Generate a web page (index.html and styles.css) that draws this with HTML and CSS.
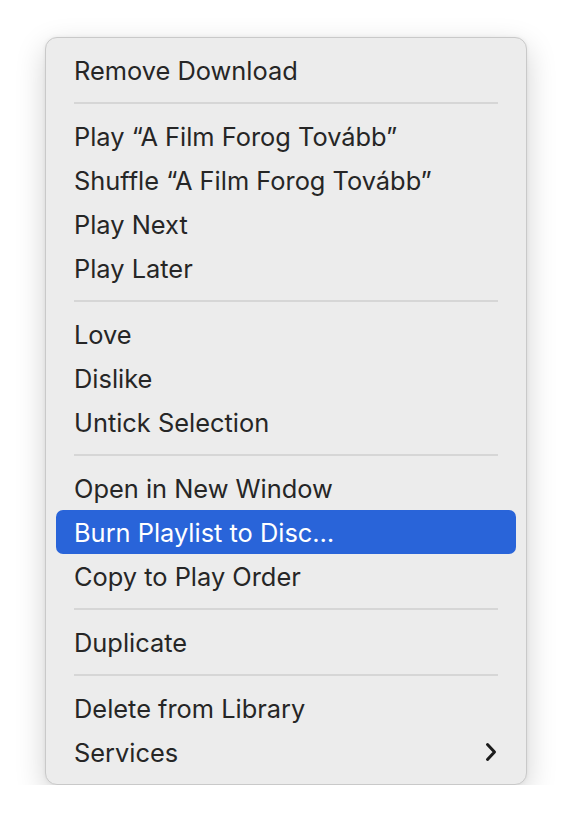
FILE: index.html
```html
<!DOCTYPE html>
<html lang="en">
<head>
    <meta charset="UTF-8">
    <title>Context Menu</title>
    <link rel="stylesheet" href="styles.css">
</head>
<body>
    <div class="menu">
        <div class="item">Remove Download</div>
        <div class="sep"></div>
        <div class="item">Play “A Film Forog Tovább”</div>
        <div class="item">Shuffle “A Film Forog Tovább”</div>
        <div class="item">Play Next</div>
        <div class="item">Play Later</div>
        <div class="sep"></div>
        <div class="item">Love</div>
        <div class="item">Dislike</div>
        <div class="item">Untick Selection</div>
        <div class="sep"></div>
        <div class="item">Open in New Window</div>
        <div class="item active">Burn Playlist to Disc…</div>
        <div class="item">Copy to Play Order</div>
        <div class="sep"></div>
        <div class="item">Duplicate</div>
        <div class="sep"></div>
        <div class="item">Delete from Library</div>
        <div class="item submenu">
            Services
            <svg class="chevron" width="12" height="20" viewBox="0 0 12 20">
                <path d="M2.5 2.5 L9.5 10 L2.5 17.5" fill="none" stroke="#1c1c1c" stroke-width="3" stroke-linecap="round" stroke-linejoin="round"/>
            </svg>
        </div>
    </div>
</body>
</html>
```

FILE: styles.css
```css
body {
    margin: 0;
    background: #ffffff;
    font-family: Inter, "Liberation Sans", sans-serif;
}
.menu {
    margin: 37px 0 0 45px;
    padding: 10px;
    box-sizing: border-box;
    width: 482px;
    height: 748px;
    background: #ececec;
    border: 1px solid #c9c9c9;
    border-radius: 12px;
    box-shadow: 0 10px 30px rgba(0, 0, 0, 0.18), 0 0 4px rgba(0, 0, 0, 0.06);
}
.item {
    height: 44px;
    box-sizing: border-box;
    display: flex;
    align-items: center;
    justify-content: space-between;
    padding: 0 19px 0 18px;
    font-size: 25.4px;
    color: #262626;
    border-radius: 7px;
}
.item.active {
    background: #2964d9;
    color: #ffffff;
}
.chevron {
    display: block;
}
.sep {
    height: 2px;
    margin: 10px 18px;
    background: #d6d6d6;
}
```
